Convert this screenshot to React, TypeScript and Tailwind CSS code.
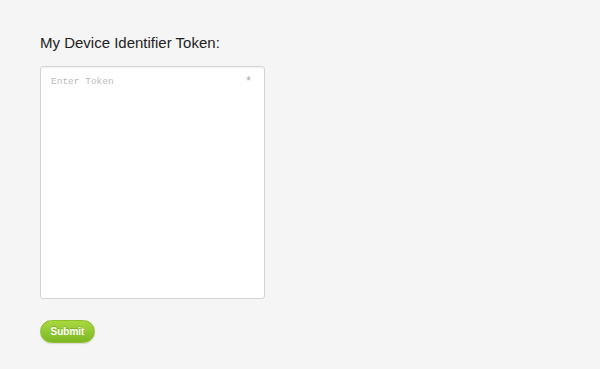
export default function App() {
  return (
    <div className="min-h-[369px] w-full bg-[#f5f5f5] px-10 pt-[34px] font-['Liberation_Sans',Arial,sans-serif]">
      <h2 className="text-[15px] leading-[18px] text-[#222]">My Device Identifier Token:</h2>
      <div className="relative mt-[14px] h-[233px] w-[225px]">
        <textarea
          placeholder="Enter Token"
          className="h-full w-full resize-none rounded-[3px] border border-[#d4d4d4] bg-white px-[10px] py-[8px] font-['Liberation_Mono','Courier_New',monospace] text-[9.5px] text-[#555] shadow-[inset_0_1px_2px_rgba(0,0,0,0.06)] outline-none placeholder:text-[#bbb]"
        />
        <span className="absolute right-[14px] top-[9px] text-[12px] leading-none text-[#aaa]">*</span>
      </div>
      <button className="mt-[21px] h-[23px] w-[55px] rounded-full border border-[#8fbf2e] bg-gradient-to-b from-[#a8d83e] to-[#7cb822] text-[10px] font-bold text-white shadow-[0_1px_1px_rgba(0,0,0,0.12)] [text-shadow:0_-1px_0_rgba(0,0,0,0.2)]">
        Submit
      </button>
    </div>
  );
}
